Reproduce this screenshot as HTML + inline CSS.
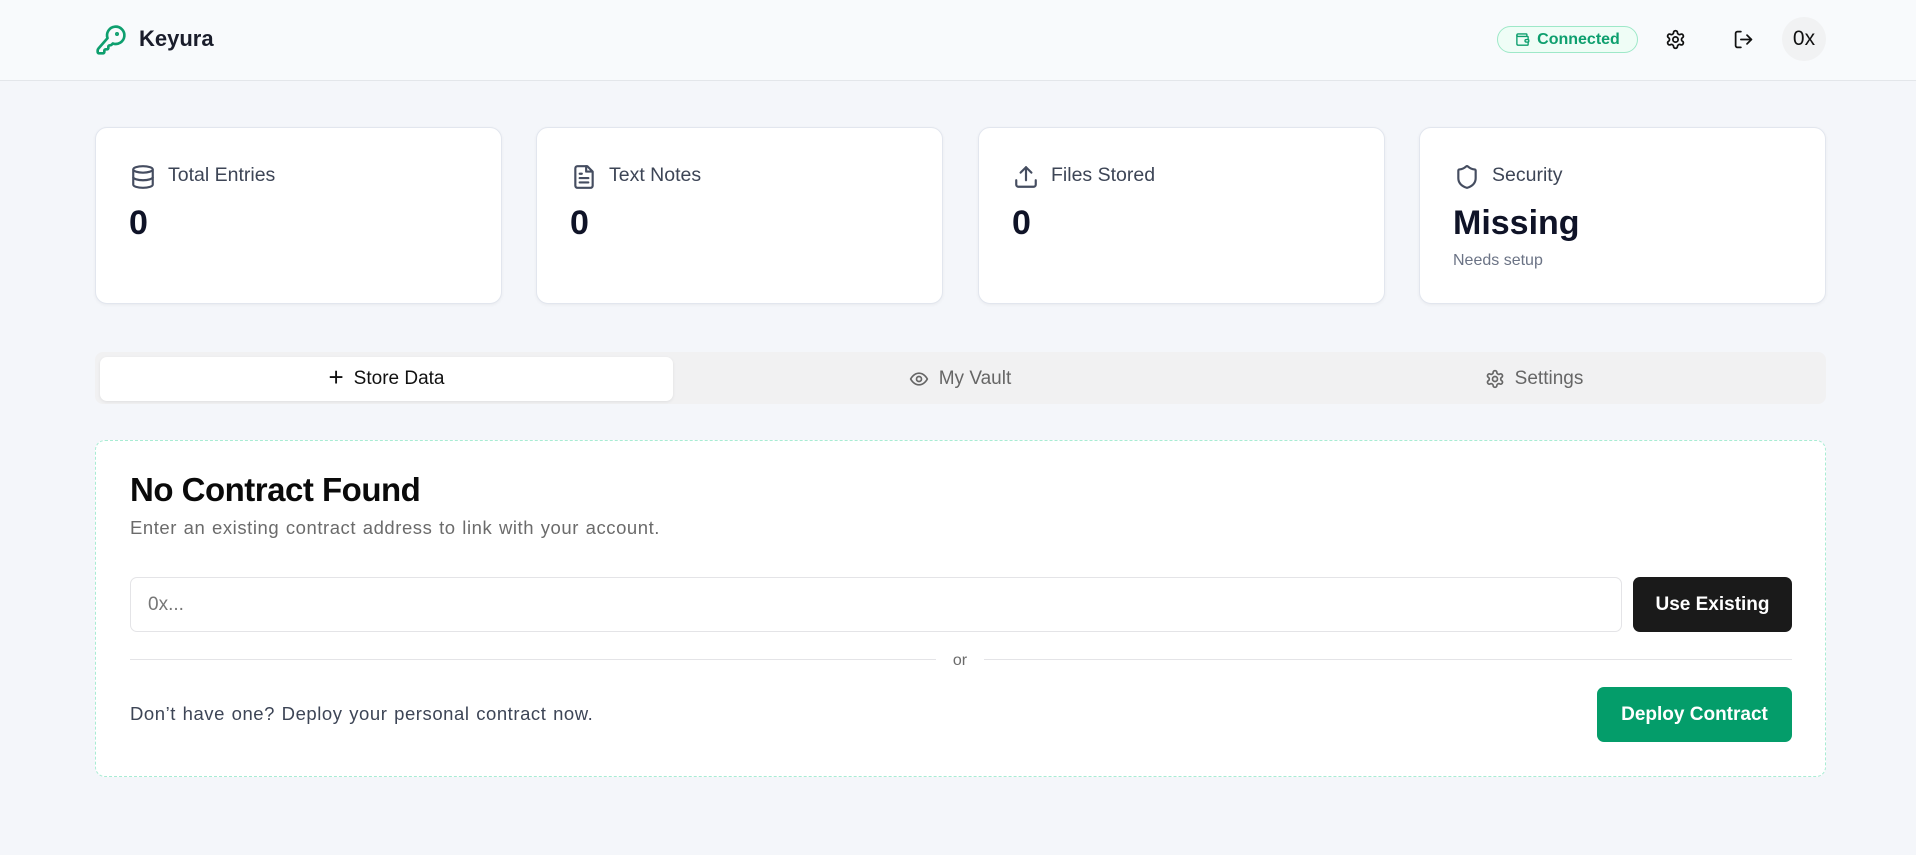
<!DOCTYPE html>
<html><head><meta charset="utf-8"><style>
*{box-sizing:border-box;margin:0;padding:0}
body{width:1916px;height:855px;overflow:hidden;background:#f4f6fa;font-family:"Liberation Sans",sans-serif;color:#111;position:relative}
.abs{position:absolute}
header{position:absolute;left:0;top:0;width:1916px;height:81px;background:#f8fafc;border-bottom:1px solid #e3e6ea}
.card{position:absolute;top:127px;width:407px;height:177px;background:#fff;border:1px solid #e2e6ee;border-radius:12px;box-shadow:0 1px 3px rgba(0,0,0,.05)}
.card .ic{position:absolute;left:34px;top:36px}
.card .t{position:absolute;left:72px;top:36px;font-size:19.5px;color:#3d4556}
.card .v{position:absolute;left:33px;top:76px;font-size:34px;font-weight:bold;color:#0f1327}
.tab{position:absolute;top:357px;height:44px;display:flex;align-items:center;justify-content:center;font-size:19px;gap:10px}
</style></head><body>
<header>
<svg class="abs" style="left:95px;top:24px" width="32" height="32" viewBox="0 0 24 24" fill="none" stroke="#0e9f6e" stroke-width="2" stroke-linecap="round" stroke-linejoin="round"><path d="M2.6 18.4A2 2 0 0 0 2 19.8V21a1 1 0 0 0 1 1h3a1 1 0 0 0 1-1v-1a1 1 0 0 1 1-1h1a1 1 0 0 0 1-1v-1a1 1 0 0 1 1-1h.2a2 2 0 0 0 1.4-.6l.8-.8a6.5 6.5 0 1 0-4-4z"/><circle cx="16.5" cy="7.5" r=".5" fill="#0e9f6e"/></svg>
<div class="abs" style="left:139px;top:26px;font-size:22px;font-weight:bold;color:#1a1d2b">Keyura</div>
<div class="abs" style="left:1497px;top:26px;width:141px;height:27px;border:1px solid #9ee8c8;border-radius:14px;background:#effdf6;display:flex;align-items:center;justify-content:center;gap:7px;color:#0e9f6e;font-size:16px;font-weight:bold">
<svg width="15" height="15" viewBox="0 0 24 24" fill="none" stroke="#0e9f6e" stroke-width="2.2"><path d="M19 7V4a1 1 0 0 0-1-1H5a2 2 0 0 0 0 4h15a1 1 0 0 1 1 1v4h-3a2 2 0 0 0 0 4h3a1 1 0 0 0 1-1v-2a1 1 0 0 0-1-1"/><path d="M3 5v14a2 2 0 0 0 2 2h15a1 1 0 0 0 1-1v-4"/></svg>Connected</div>
<svg class="abs" style="left:1665px;top:29px" width="21" height="21" viewBox="0 0 24 24" fill="none" stroke="#111" stroke-width="2" stroke-linecap="round" stroke-linejoin="round"><path d="M12.22 2h-.44a2 2 0 0 0-2 2v.18a2 2 0 0 1-1 1.73l-.43.25a2 2 0 0 1-2 0l-.15-.08a2 2 0 0 0-2.730.73l-.22.38a2 2 0 0 0 .73 2.73l.15.1a2 2 0 0 1 1 1.72v.51a2 2 0 0 1-1 1.74l-.15.09a2 2 0 0 0-.73 2.73l.22.38a2 2 0 0 0 2.73.73l.15-.08a2 2 0 0 1 2 0l.43.25a2 2 0 0 1 1 1.73V20a2 2 0 0 0 2 2h.44a2 2 0 0 0 2-2v-.18a2 2 0 0 1 1-1.73l.43-.25a2 2 0 0 1 2 0l.15.08a2 2 0 0 0 2.73-.73l.22-.39a2 2 0 0 0-.73-2.730l-.15-.08a2 2 0 0 1-1-1.74v-.5a2 2 0 0 1 1-1.74l.15-.09a2 2 0 0 0 .73-2.73l-.22-.38a2 2 0 0 0-2.73-.73l-.15.08a2 2 0 0 1-2 0l-.43-.25a2 2 0 0 1-1-1.73V4a2 2 0 0 0-2-2z"/><circle cx="12" cy="12" r="3"/></svg>
<svg class="abs" style="left:1733px;top:29px" width="21" height="21" viewBox="0 0 24 24" fill="none" stroke="#111" stroke-width="2" stroke-linecap="round" stroke-linejoin="round"><path d="M9 21H5a2 2 0 0 1-2-2V5a2 2 0 0 1 2-2h4"/><path d="M16 17l5-5-5-5"/><path d="M21 12H9"/></svg>
<div class="abs" style="left:1782px;top:17px;width:44px;height:44px;border-radius:50%;background:#f1f2f3;display:flex;align-items:center;justify-content:center;font-size:21px;color:#111">0x</div>
</header>

<div class="card" style="left:95px"><svg class="ic" width="26" height="26" viewBox="0 0 24 24" fill="none" stroke="#454d60" stroke-width="2"><ellipse cx="12" cy="5" rx="9" ry="3"/><path d="M3 5v14a9 3 0 0 0 18 0V5"/><path d="M3 12a9 3 0 0 0 18 0"/></svg><div class="t">Total Entries</div><div class="v">0</div></div>
<div class="card" style="left:536px"><svg class="ic" width="26" height="26" viewBox="0 0 24 24" fill="none" stroke="#454d60" stroke-width="2" stroke-linecap="round" stroke-linejoin="round"><path d="M15 2H6a2 2 0 0 0-2 2v16a2 2 0 0 0 2 2h12a2 2 0 0 0 2-2V7z"/><path d="M14 2v5h5"/><path d="M16 13H8M16 17H8M10 9H8"/></svg><div class="t">Text Notes</div><div class="v">0</div></div>
<div class="card" style="left:978px"><svg class="ic" width="26" height="26" viewBox="0 0 24 24" fill="none" stroke="#454d60" stroke-width="2" stroke-linecap="round" stroke-linejoin="round"><path d="M21 15v4a2 2 0 0 1-2 2H5a2 2 0 0 1-2-2v-4"/><path d="M17 8l-5-5-5 5"/><path d="M12 3v12"/></svg><div class="t">Files Stored</div><div class="v">0</div></div>
<div class="card" style="left:1419px"><svg class="ic" width="26" height="26" viewBox="0 0 24 24" fill="none" stroke="#454d60" stroke-width="2" stroke-linejoin="round"><path d="M20 13c0 5-3.5 7.5-7.66 8.95a1 1 0 0 1-.67-.01C7.5 20.5 4 18 4 13V6a1 1 0 0 1 1-1c2 0 4.5-1.2 6.24-2.72a1.17 1.17 0 0 1 1.52 0C14.51 3.810 17 5 19 5a1 1 0 0 1 1 1z"/></svg><div class="t">Security</div><div class="v">Missing</div><div class="abs" style="left:33px;top:124px;font-size:16px;color:#6b7385">Needs setup</div></div>

<div class="abs" style="left:95px;top:352px;width:1731px;height:52px;background:#f1f1f2;border-radius:8px"></div>
<div class="tab" style="left:100px;width:573px;background:#fff;border-radius:7px;box-shadow:0 1px 3px rgba(0,0,0,.08);color:#111"><span style="font-size:26px;font-weight:300;margin-top:-3px">+</span>Store Data</div>
<div class="tab" style="left:673px;width:574px;color:#666"><svg width="20" height="20" viewBox="0 0 24 24" fill="none" stroke="#666" stroke-width="2"><path d="M2 12s3.5-7 10-7 10 7 10 7-3.5 7-10 7S2 12 2 12z"/><circle cx="12" cy="12" r="3"/></svg>My Vault</div>
<div class="tab" style="left:1247px;width:574px;color:#666"><svg width="20" height="20" viewBox="0 0 24 24" fill="none" stroke="#666" stroke-width="2"><path d="M12.22 2h-.44a2 2 0 0 0-2 2v.18a2 2 0 0 1-1 1.73l-.43.25a2 2 0 0 1-2 0l-.15-.08a2 2 0 0 0-2.73.73l-.22.38a2 2 0 0 0 .73 2.73l.15.1a2 2 0 0 1 1 1.72v.51a2 2 0 0 1-1 1.74l-.15.09a2 2 0 0 0-.73 2.73l.22.38a2 2 0 0 0 2.73.73l.15-.08a2 2 0 0 1 2 0l.43.25a2 2 0 0 1 1 1.73V20a2 2 0 0 0 2 2h.44a2 2 0 0 0 2-2v-.18a2 2 0 0 1 1-1.73l.43-.25a2 2 0 0 1 2 0l.15.08a2 2 0 0 0 2.73-.73l.22-.39a2 2 0 0 0-.73-2.73l-.15-.08a2 2 0 0 1-1-1.74v-.5a2 2 0 0 1 1-1.74l.15-.09a2 2 0 0 0 .73-2.73l-.22-.38a2 2 0 0 0-2.73-.73l-.15.08a2 2 0 0 1-2 0l-.43-.25a2 2 0 0 1-1-1.73V4a2 2 0 0 0-2-2z"/><circle cx="12" cy="12" r="3"/></svg>Settings</div>

<div class="abs" style="left:95px;top:440px;width:1731px;height:337px;background:#fff;border:1px dashed #a8ecd3;border-radius:10px"></div>
<div class="abs" style="left:130px;top:471px;font-size:33px;font-weight:bold;color:#0a0a0a;letter-spacing:-0.5px">No Contract Found</div>
<div class="abs" style="left:130px;top:517px;font-size:18.5px;letter-spacing:0.55px;word-spacing:1px;color:#6b6b6b">Enter an existing contract address to link with your account.</div>
<div class="abs" style="left:130px;top:577px;width:1492px;height:55px;border:1px solid #e4e4e7;border-radius:7px;padding-left:17px;line-height:53px;font-size:19px;color:#777">0x...</div>
<div class="abs" style="left:1633px;top:577px;width:159px;height:55px;background:#1a1a1a;border-radius:7px;color:#fff;font-size:19px;font-weight:bold;display:flex;align-items:center;justify-content:center">Use Existing</div>
<div class="abs" style="left:130px;top:659px;width:806px;height:1px;background:#e4e4e7"></div>
<div class="abs" style="left:984px;top:659px;width:808px;height:1px;background:#e4e4e7"></div>
<div class="abs" style="left:940px;top:652px;width:40px;text-align:center;font-size:16px;color:#6b6b6b">or</div>
<div class="abs" style="left:130px;top:703px;font-size:18.5px;letter-spacing:0.55px;word-spacing:1px;color:#3d4556">Don’t have one? Deploy your personal contract now.</div>
<div class="abs" style="left:1597px;top:687px;width:195px;height:55px;background:#049d6a;border-radius:7px;color:#fff;font-size:19px;font-weight:bold;display:flex;align-items:center;justify-content:center">Deploy Contract</div>
</body></html>
